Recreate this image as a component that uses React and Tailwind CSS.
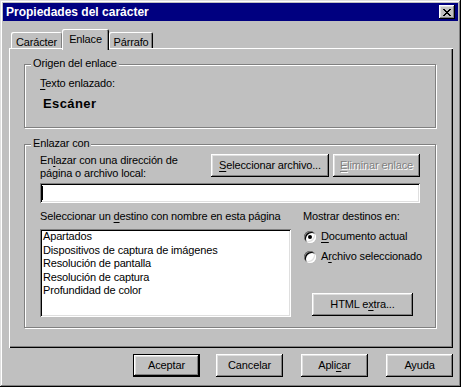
import React from "react";

const bevelOut =
  "shadow-[inset_-1px_-1px_#000,inset_1px_1px_#fff,inset_-2px_-2px_#808080,inset_2px_2px_#dfdfdf]";
const sunken =
  "shadow-[inset_1px_1px_#808080,inset_-1px_-1px_#fff,inset_2px_2px_#000,inset_-2px_-2px_#dfdfdf]";
const etched = "border border-[#808080] shadow-[1px_1px_#fff,inset_1px_1px_#fff]";

function U({ children }) {
  return <span className="underline decoration-1 underline-offset-[2px]">{children}</span>;
}

function Btn({ children, className = "", disabled = false, def = false }) {
  if (def) {
    return (
      <div className={`border border-black bg-[#c0c0c0] flex ${className}`}>
        <div className={`flex-1 flex items-center justify-center ${bevelOut}`}>{children}</div>
      </div>
    );
  }
  return (
    <div
      className={`flex items-center justify-center whitespace-nowrap bg-[#c0c0c0] ${bevelOut} ${
        disabled ? "text-[#808080] [text-shadow:1px_1px_0_#fff]" : ""
      } ${className}`}
    >
      {children}
    </div>
  );
}

function Radio({ checked }) {
  return (
    <div
      className={`shrink-0 w-[12px] h-[12px] rounded-full bg-white flex items-center justify-center ${sunken}`}
    >
      {checked && <div className="w-[4px] h-[4px] rounded-full bg-black" />}
    </div>
  );
}

function Group({ label, className = "", children }) {
  return (
    <div className={`relative ${etched} pl-[15px] pr-[15px] ${className}`}>
      <span className="absolute left-[6px] top-[-8px] px-[2px] bg-[#c0c0c0] leading-[13px]">
        {label}
      </span>
      {children}
    </div>
  );
}

export default function App() {
  return (
    <div className="w-[461px] h-[387px] bg-[#c0c0c0] p-[3px] flex flex-col font-['Liberation_Sans',Arial,sans-serif] text-[11px] leading-[13px] tracking-[-0.15px] text-black shadow-[inset_-1px_-1px_#000,inset_1px_1px_#dfdfdf,inset_-2px_-2px_#808080,inset_2px_2px_#fff]">
      {/* Title bar */}
      <div className="h-[18px] bg-[#000080] flex items-center justify-between pl-[3px] pr-[3px]">
        <span className="text-white font-bold text-[12px] leading-[18px] tracking-normal">
          Propiedades del carácter
        </span>
        <div className={`w-[16px] h-[14px] bg-[#c0c0c0] flex items-center justify-center ${bevelOut}`}>
          <svg width="8" height="7" viewBox="0 0 8 7" shapeRendering="crispEdges">
            <path
              d="M0 0h2v1H0zM6 0h2v1H6zM1 1h2v1H1zM5 1h2v1H5zM2 2h4v1H2zM3 3h2v1H3zM2 4h4v1H2zM1 5h2v1H1zM5 5h2v1H5zM0 6h2v1H0zM6 6h2v1H6z"
              fill="#000"
            />
          </svg>
        </div>
      </div>

      <div className="mt-[8px] ml-[6px] mr-[5px] flex flex-col">
        {/* Tabs */}
        <div className="flex items-end h-[19px] pl-[2px]">
          <div className="w-[51px] h-[16px] rounded-t-[2px] flex justify-center pt-[4px] shadow-[inset_1px_1px_#fff,inset_-1px_0_#808080]">
            Carácter
          </div>
          <div className="relative z-10 w-[47px] h-[21px] mb-[-2px] bg-[#c0c0c0] rounded-t-[2px] flex justify-center pt-[4px] shadow-[inset_1px_1px_#fff,inset_-1px_0_#000,inset_-2px_0_#808080]">
            Enlace
          </div>
          <div className="w-[44px] h-[16px] rounded-t-[2px] flex justify-center pt-[4px] shadow-[inset_1px_1px_#fff,inset_-1px_0_#000,inset_-2px_0_#808080]">
            Párrafo
          </div>
        </div>

        {/* Panel */}
        <div className="h-[300px] flex flex-col pl-[15px] pr-[17px] pt-[16px] shadow-[inset_1px_1px_#fff,inset_-1px_-1px_#000,inset_-2px_-2px_#808080]">
          <Group label="Origen del enlace" className="pt-[12px] pb-[16px]">
            <div className="leading-[13px]">
              <U>T</U>exto enlazado:
            </div>
            <div className="mt-[6px] ml-[3px] leading-[15px] text-[13px] font-bold tracking-[0.4px]">
              Escáner
            </div>
          </Group>

          <Group label="Enlazar con" className="mt-[16px] pt-[9px] pb-[10px]">
            <div className="flex items-start h-[26px]">
              <div className="flex-1 leading-[13px]">
                En<U>l</U>azar con una dirección de
                <br />
                página o archivo local:
              </div>
              <Btn className="w-[118px] h-[23px]">
                <span>
                  <U>S</U>eleccionar archivo...
                </span>
              </Btn>
              <Btn className="w-[87px] h-[23px] ml-[4px]" disabled>
                <span>
                  <U>E</U>liminar enlace
                </span>
              </Btn>
            </div>

            <div className={`mt-[3px] h-[20px] bg-white pl-[2px] pt-[3px] ${sunken}`}>
              <div className="w-[1px] h-[14px] bg-black" />
            </div>

            <div className="flex mt-[7px]">
              <div className="w-[251px] shrink-0 flex flex-col">
                <div className="leading-[13px] whitespace-nowrap">
                  Seleccionar un <U>d</U>estino con nombre en esta página
                </div>
                <div className={`mt-[6px] h-[88px] bg-white pl-[3px] pt-[1px] overflow-hidden ${sunken}`}>
                  <div className="leading-[13.5px]">
                    <div>Apartados</div>
                    <div>Dispositivos de captura de imágenes</div>
                    <div>Resolución de pantalla</div>
                    <div>Resolución de captura</div>
                    <div>Profundidad de color</div>
                  </div>
                </div>
              </div>

              <div className="ml-[12px] flex-1 flex flex-col whitespace-nowrap">
                <div className="leading-[13px]">Mostrar destinos en:</div>
                <div className="mt-[7px] h-[13px] flex items-center pl-[1px]">
                  <Radio checked />
                  <span className="ml-[5px]">
                    <U>D</U>ocumento actual
                  </span>
                </div>
                <div className="mt-[7px] h-[13px] flex items-center pl-[1px]">
                  <Radio />
                  <span className="ml-[5px]">
                    A<U>r</U>chivo seleccionado
                  </span>
                </div>
                <Btn className="mt-[30px] ml-[9px] w-[101px] h-[23px]">
                  <span>
                    HTML e<U>x</U>tra...
                  </span>
                </Btn>
              </div>
            </div>
          </Group>
        </div>

        {/* Bottom buttons */}
        <div className="mt-[6px] flex justify-end">
          <Btn def className="w-[67px] h-[23px]">
            Aceptar
          </Btn>
          <Btn className="ml-[16px] w-[67px] h-[23px]">Cancelar</Btn>
          <Btn className="ml-[18px] w-[67px] h-[23px]">
            <span>
              Apli<U>c</U>ar
            </span>
          </Btn>
          <Btn className="ml-[18px] w-[67px] h-[23px]">Ayuda</Btn>
        </div>
      </div>
    </div>
  );
}
